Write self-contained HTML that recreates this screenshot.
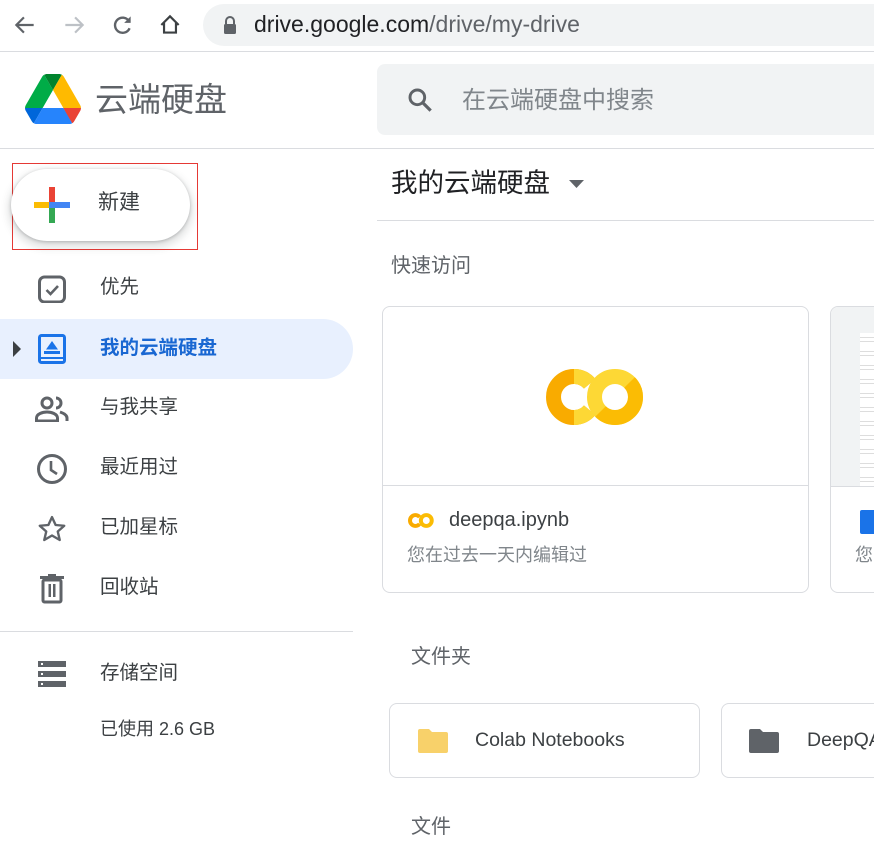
<!DOCTYPE html>
<html><head><meta charset="utf-8"><style>
*{box-sizing:border-box;margin:0;padding:0}
body{width:874px;height:843px;overflow:hidden;background:#fff;font-family:"Liberation Sans","Noto Sans CJK SC",sans-serif;color:#3c4043;position:relative}
.abs{position:absolute}
.t{position:absolute;white-space:nowrap;line-height:1.2}
</style></head><body>
<svg class="abs" style="left:12px;top:12px" width="26" height="26" viewBox="0 0 24 24"><path d="M20 12H5M11 5l-7 7 7 7" fill="none" stroke="#5f6368" stroke-width="2"/></svg>
<svg class="abs" style="left:61px;top:12px" width="26" height="26" viewBox="0 0 24 24"><path d="M4 12h15M13 5l7 7-7 7" fill="none" stroke="#bdc1c6" stroke-width="2"/></svg>
<svg class="abs" style="left:109px;top:12px" width="26" height="26" viewBox="0 0 24 24"><path d="M18.5 8.5A7 7 0 1 0 19 15" fill="none" stroke="#5f6368" stroke-width="2.2"/><path d="M20 4v6h-6z" fill="#5f6368"/></svg>
<svg class="abs" style="left:157px;top:12px" width="26" height="26" viewBox="0 0 24 24"><path d="M4 12L12 4l8 8M6.5 10v9h11v-9" fill="none" stroke="#3c4043" stroke-width="2"/></svg>
<div class="abs" style="left:203px;top:4px;width:700px;height:42px;border-radius:21px;background:#f1f3f4"></div>
<svg class="abs" style="left:222px;top:15px" width="16" height="20" viewBox="0 0 16 20"><path d="M4 9V6a4 4 0 0 1 8 0v3" fill="none" stroke="#5f6368" stroke-width="2"/><rect x="2" y="9" width="12" height="10" rx="1.5" fill="#5f6368"/></svg>
<div class="t" style="left:254px;top:11px;font-size:23px;color:#202124">drive.google.com<span style="color:#5f6368">/drive/my-drive</span></div>
<div class="abs" style="left:0;top:51px;width:874px;height:1px;background:#dadce0"></div>

<svg class="abs" style="left:25px;top:74px" width="56" height="50" viewBox="0 0 87.3 78"><path d="m6.6 66.85 3.85 6.65c.8 1.4 1.950 2.5 3.3 3.3l13.75-23.8h-27.5c0 1.55.4 3.1 1.2 4.5z" fill="#0066da"/><path d="m43.65 25-13.75-23.8c-1.35.8-2.5 1.9-3.3 3.3l-25.4 44a9.06 9.06 0 0 0 -1.2 4.5h27.5z" fill="#00ac47"/><path d="m73.55 76.8c1.35-.8 2.5-1.9 3.3-3.3l1.6-2.75 7.65-13.25c.8-1.4 1.2-2.95 1.2-4.5h-27.502l5.852 11.5z" fill="#ea4335"/><path d="m43.65 25 13.75-23.8c-1.35-.8-2.9-1.2-4.5-1.2h-18.5c-1.6 0-3.15.45-4.5 1.200z" fill="#00832d"/><path d="m59.8 53h-32.3l-13.75 23.8c1.35.8 2.9 1.2 4.5 1.2h50.8c1.6 0 3.15-.45 4.5-1.2z" fill="#2684fc"/><path d="m73.4 26.5-12.7-22c-.8-1.4-1.95-2.5-3.3-3.3l-13.750 23.8 16.15 28h27.45c0-1.55-.4-3.1-1.2-4.5z" fill="#ffba00"/></svg>
<div class="t" style="left:95px;top:80px;font-size:33px;color:#5f6368">云端硬盘</div>
<div class="abs" style="left:377px;top:64px;width:520px;height:71px;border-radius:8px;background:#f1f3f4"></div>
<svg class="abs" style="left:404px;top:84px" width="32" height="32" viewBox="0 0 24 24"><circle cx="10" cy="10" r="5.5" fill="none" stroke="#5f6368" stroke-width="2.2"/><path d="M14 14l6 6" stroke="#5f6368" stroke-width="2.4"/></svg>
<div class="t" style="left:462px;top:87px;font-size:24px;color:#80868b">在云端硬盘中搜索</div>
<div class="abs" style="left:0;top:148px;width:874px;height:1px;background:#dadce0"></div>

<div class="abs" style="left:12px;top:163px;width:186px;height:87px;border:1px solid #e53935"></div>
<div class="abs" style="left:11px;top:169px;width:179px;height:72px;border-radius:36px;background:#fff;box-shadow:0 1px 3px rgba(60,64,67,.3),0 4px 8px 3px rgba(60,64,67,.15)"></div>
<svg class="abs" style="left:34px;top:187px" width="36" height="36" viewBox="0 0 36 36"><rect x="15" y="0" width="6" height="16" fill="#ea4335"/><rect x="0" y="15" width="16" height="6" fill="#fbbc04"/><rect x="15" y="20" width="6" height="16" fill="#34a853"/><rect x="20" y="15" width="16" height="6" fill="#4285f4"/><path d="M15 15h6v6h-6z" fill="#4285f4"/></svg>
<div class="t" style="left:98px;top:190px;font-size:21px;color:#3c4043">新建</div>

<svg class="abs" style="left:37px;top:275px" width="30" height="28" viewBox="0 0 30 28"><rect x="2.5" y="2" width="25" height="25" rx="5" fill="none" stroke="#5f6368" stroke-width="3"/><path d="M9.5 15l4 4 7.5-8" fill="none" stroke="#5f6368" stroke-width="2.6"/></svg>
<div class="t" style="left:100px;top:276px;font-size:19.5px">优先</div>

<div class="abs" style="left:0;top:319px;width:353px;height:60px;border-radius:0 30px 30px 0;background:#e8f0fe"></div>
<svg class="abs" style="left:13px;top:341px" width="9" height="16"><path d="M0 0l8 8-8 8z" fill="#3c4043"/></svg>
<svg class="abs" style="left:38px;top:334px" width="28" height="30" viewBox="0 0 28 30"><rect x="1.5" y="1.5" width="25" height="27" rx="2" fill="none" stroke="#1a73e8" stroke-width="3"/><path d="M14 7l6 8.5h-12z" fill="#1a73e8"/><rect x="6" y="17" width="16" height="3" fill="#1a73e8"/><rect x="1" y="23" width="26" height="2" fill="#1a73e8"/></svg>
<div class="t" style="left:100px;top:337px;font-size:19.5px;font-weight:bold;color:#1967d2">我的云端硬盘</div>

<svg class="abs" style="left:35px;top:396px" width="34" height="26" viewBox="0 0 34 26"><circle cx="12" cy="7" r="5" fill="none" stroke="#5f6368" stroke-width="3"/><path d="M1.5 25v-3c0-4 6-6 10.5-6s10.5 2 10.5 6v3z" fill="none" stroke="#5f6368" stroke-width="3"/><path d="M21 2a5 5 0 0 1 0 10M25 16c3 1 7 3 7 6v3" fill="none" stroke="#5f6368" stroke-width="3"/></svg>
<div class="t" style="left:100px;top:396px;font-size:19.5px">与我共享</div>

<svg class="abs" style="left:36px;top:453px" width="32" height="32" viewBox="0 0 32 32"><circle cx="16" cy="16" r="13.5" fill="none" stroke="#5f6368" stroke-width="3"/><path d="M15 8v9l6 4" fill="none" stroke="#5f6368" stroke-width="2.6"/></svg>
<div class="t" style="left:100px;top:456px;font-size:19.5px">最近用过</div>

<svg class="abs" style="left:37px;top:514px" width="30" height="30" viewBox="0 0 24 24"><path d="M12 2.5l2.9 6.3 6.9.6-5.2 4.6 1.6 6.8L12 17.2l-6.2 3.6 1.6-6.8L2.2 9.4l6.9-.6z" fill="none" stroke="#5f6368" stroke-width="1.9" stroke-linejoin="round"/></svg>
<div class="t" style="left:100px;top:516px;font-size:19.5px">已加星标</div>

<svg class="abs" style="left:40px;top:574px" width="24" height="30" viewBox="0 0 24 30"><rect x="0" y="2" width="24" height="3" fill="#5f6368"/><rect x="8" y="0" width="8" height="3" fill="#5f6368"/><rect x="3" y="6" width="18" height="22" rx="1.5" fill="none" stroke="#5f6368" stroke-width="3"/><rect x="8.5" y="10" width="2.5" height="13" fill="#5f6368"/><rect x="13" y="10" width="2.5" height="13" fill="#5f6368"/></svg>
<div class="t" style="left:100px;top:576px;font-size:19.5px">回收站</div>

<div class="abs" style="left:0;top:631px;width:353px;height:1px;background:#dadce0"></div>
<svg class="abs" style="left:38px;top:661px" width="28" height="26" viewBox="0 0 28 26"><rect y="0" width="28" height="6" fill="#5f6368"/><rect y="10" width="28" height="6" fill="#5f6368"/><rect y="20" width="28" height="6" fill="#5f6368"/><rect x="3" y="2" width="2" height="2" fill="#fff"/><rect x="3" y="12" width="2" height="2" fill="#fff"/><rect x="3" y="22" width="2" height="2" fill="#fff"/></svg>
<div class="t" style="left:100px;top:662px;font-size:19.5px">存储空间</div>
<div class="t" style="left:100px;top:719px;font-size:18px;color:#3c4043">已使用 2.6 GB</div>

<div class="t" style="left:391px;top:168px;font-size:26.5px;color:#202124">我的云端硬盘</div>
<svg class="abs" style="left:569px;top:180px" width="16" height="9"><path d="M0 0h15l-7.5 8z" fill="#5f6368"/></svg>
<div class="abs" style="left:377px;top:220px;width:497px;height:1px;background:#dadce0"></div>
<div class="t" style="left:391px;top:254px;font-size:20px;color:#5f6368">快速访问</div>

<div class="abs" style="left:382px;top:306px;width:427px;height:287px;border:1px solid #dadce0;border-radius:8px"></div>
<div class="abs" style="left:383px;top:485px;width:425px;height:1px;background:#dadce0"></div>
<svg class="abs" style="left:546px;top:369px" width="98" height="56" viewBox="0 0 98 56">
<path d="M43.7 14.8A20.5 20.5 0 1 0 43.7 41.2" fill="none" stroke="#f9ab00" stroke-width="15"/>
<path d="M28 48.5A20.5 20.5 0 0 0 43.7 41.2" fill="none" stroke="#fdd835" stroke-width="15"/>
<path d="M43.7 14.8A20.5 20.5 0 0 0 28 7.5" fill="none" stroke="#fdd835" stroke-width="15"/>
<circle cx="69" cy="28" r="20.5" fill="none" stroke="#fdd835" stroke-width="15"/>
<path d="M83.5 13.5A20.5 20.5 0 0 1 54.5 42.5" fill="none" stroke="#fbbc04" stroke-width="15"/>
</svg>
<svg class="abs" style="left:408px;top:513px" width="26" height="15" viewBox="0 0 98 56">
<path d="M43.7 14.8A20.5 20.5 0 1 0 43.7 41.2" fill="none" stroke="#f9ab00" stroke-width="15"/>
<circle cx="69" cy="28" r="20.5" fill="none" stroke="#fbbc04" stroke-width="15"/>
</svg>
<div class="t" style="left:449px;top:508px;font-size:20px;color:#3c4043">deepqa.ipynb</div>
<div class="t" style="left:407px;top:545px;font-size:18px;color:#80868b">您在过去一天内编辑过</div>

<div class="abs" style="left:830px;top:306px;width:60px;height:287px;border:1px solid #dadce0;border-radius:8px;overflow:hidden"><div class="abs" style="left:0;top:0;width:60px;height:179px;background:#f1f3f4"></div><div class="abs" style="left:29px;top:26px;width:40px;height:153px;background:#fff;background-image:repeating-linear-gradient(#fff 0 4px,#ddd 4px 5px,#fff 5px 8px,#ddd 8px 9px,#fff 9px 14px)"></div><div class="abs" style="left:0;top:179px;width:60px;height:1px;background:#dadce0"></div><div class="abs" style="left:29px;top:203px;width:20px;height:24px;background:#1a73e8;border-radius:2px"></div><div class="t" style="left:24px;top:238px;font-size:18px;color:#80868b">您</div></div>

<div class="t" style="left:411px;top:645px;font-size:20px;color:#5f6368">文件夹</div>
<div class="abs" style="left:389px;top:703px;width:311px;height:75px;border:1px solid #dadce0;border-radius:8px"></div>
<svg class="abs" style="left:418px;top:729px" width="30" height="24" viewBox="0 0 30 24"><path d="M2 0h9l3 3h14a2 2 0 0 1 2 2v17a2 2 0 0 1-2 2H2a2 2 0 0 1-2-2V2a2 2 0 0 1 2-2z" fill="#f8d16a"/></svg>
<div class="t" style="left:475px;top:729px;font-size:19.5px;color:#3c4043">Colab Notebooks</div>
<div class="abs" style="left:721px;top:703px;width:200px;height:75px;border:1px solid #dadce0;border-radius:8px"></div>
<svg class="abs" style="left:749px;top:729px" width="30" height="24" viewBox="0 0 30 24"><path d="M2 0h9l3 3h14a2 2 0 0 1 2 2v17a2 2 0 0 1-2 2H2a2 2 0 0 1-2-2V2a2 2 0 0 1 2-2z" fill="#5f6368"/></svg>
<div class="t" style="left:807px;top:729px;font-size:19.5px;color:#3c4043">DeepQA</div>
<div class="t" style="left:411px;top:815px;font-size:20px;color:#5f6368">文件</div>
</body></html>
